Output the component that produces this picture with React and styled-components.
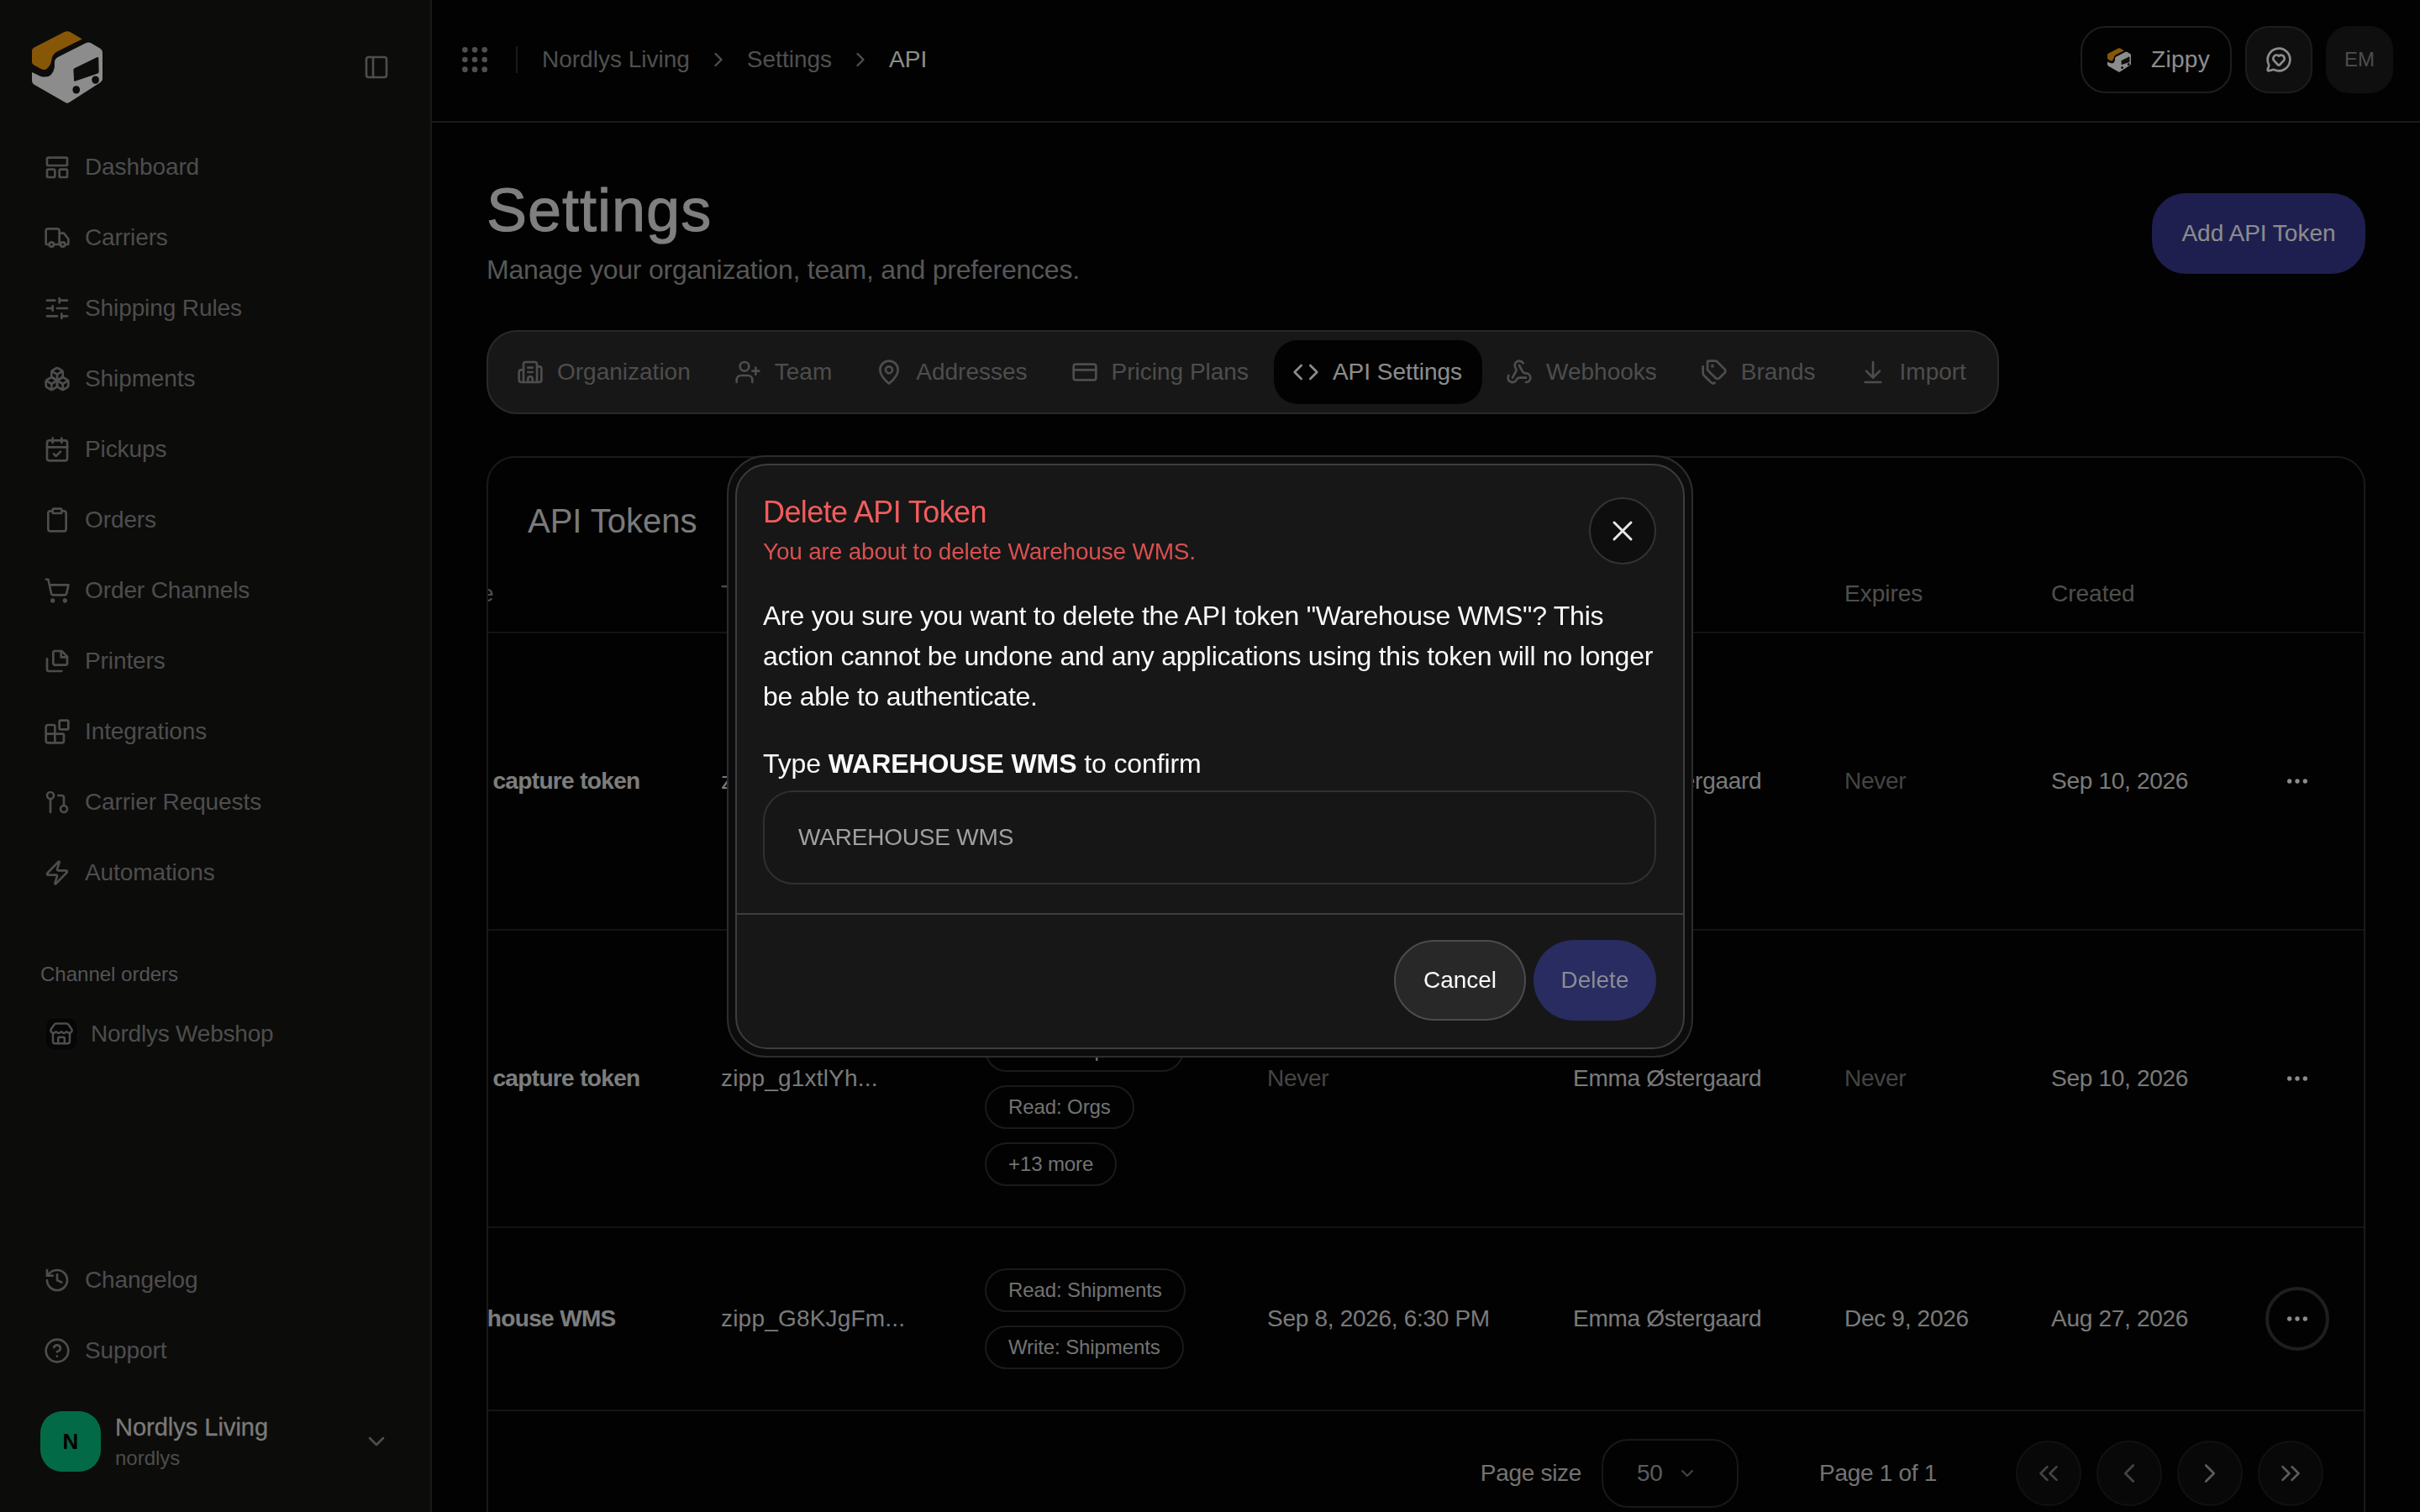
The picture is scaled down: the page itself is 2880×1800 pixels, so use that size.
import React, { useLayoutEffect, useRef } from 'react';
import styled, { createGlobalStyle } from 'styled-components';
import {
  Truck, SlidersHorizontal, Boxes, CalendarCheck, Clipboard, ShoppingCart, Blocks, GitPullRequest, Zap,
  History, CircleHelp, Store, ChevronDown, ChevronRight, ChevronLeft, ChevronsLeft, ChevronsRight,
  PanelLeft, Grip, MessageCircleHeart, Building2, UserPlus, MapPin, CreditCard, Code, Webhook, Tags,
  ArrowDownToLine, Ellipsis, X,
} from 'lucide-react';

const GlobalStyle = createGlobalStyle`
  html, body {
    margin: 0;
    height: 100%;
    overflow: hidden;
    background: #050505;
    font-family: "Liberation Sans", Arial, sans-serif;
  }
  * { box-sizing: border-box; }
`;

const Shell = styled.div`
  display: grid;
  grid-template-columns: 514px 1fr;
  height: 1800px;
  overflow: hidden;
  background: #050505;
`;

/* sidebar */
const Sidebar = styled.aside`
  display: flex;
  flex-direction: column;
  height: 1800px;
  background: #161614;
  border-right: 2px solid #2e2e2e;
  padding-bottom: 48px;
`;
const LogoRow = styled.div`
  display: flex;
  align-items: center;
  justify-content: space-between;
  height: 157px;
  padding: 0 48px 0 38px;
  color: #8c8c8c;
`;
const LogoRowInner = styled.div`
  display: flex;
  margin-top: 3px;
  color: #8c8c8c;
`;
const LogoSvg = styled.svg`
  display: block;
  flex: none;
`;
const NavList = styled.nav`
  display: flex;
  flex-direction: column;
`;
const NavItem = styled.a`
  display: flex;
  align-items: center;
  gap: 17px;
  height: 84px;
  padding-left: 52px;
  font-size: 28px;
  letter-spacing: -0.1px;
  color: #8c8c8c;
  svg { flex: none; }
`;
const SectionLabel = styled.div`
  margin: 59px 0 0 48px;
  font-size: 24px;
  line-height: 40px;
  color: #9a9a9a;
`;
const ChannelRow = styled.a`
  display: flex;
  align-items: center;
  gap: 15px;
  margin-top: 31px;
  padding-left: 53px;
  font-size: 28px;
  letter-spacing: -0.2px;
  color: #8c8c8c;
`;
const ChannelIcon = styled.span`
  display: flex;
  align-items: center;
  justify-content: center;
  width: 40px;
  height: 40px;
  border-radius: 12px;
  background: #0b0b0b;
  border: 1px solid #1e1e1e;
`;
const BottomNav = styled(NavList)`
  margin-top: auto;
`;
const OrgRow = styled.div`
  display: flex;
  align-items: center;
  gap: 17px;
  margin-top: 30px;
  padding: 0 48px;
`;
const OrgAvatar = styled.div`
  display: flex;
  align-items: center;
  justify-content: center;
  flex: none;
  width: 72px;
  height: 72px;
  border-radius: 26px;
  background: #06c281;
  color: #000;
  font-size: 26px;
  font-weight: 700;
`;
const OrgText = styled.div`
  flex: 1;
  display: flex;
  flex-direction: column;
  gap: 4px;
`;
const OrgName = styled.div`
  font-size: 29px;
  line-height: 36px;
  -webkit-text-stroke: 0.3px #dedede;
  color: #dedede;
`;
const OrgSlug = styled.div`
  font-size: 24px;
  line-height: 30px;
  color: #8c8c8c;
`;

/* top bar */
const Main = styled.main`
  display: flex;
  flex-direction: column;
  min-width: 0;
`;
const TopBar = styled.header`
  display: flex;
  align-items: center;
  height: 146px;
  flex: none;
  padding: 0 32px 2px 31px;
  border-bottom: 2px solid #303030;
`;
const Crumbs = styled.div`
  display: flex;
  align-items: center;
  flex: 1;
  font-size: 28px;
  color: #919191;
`;
const BarRule = styled.span`
  width: 2px;
  height: 32px;
  margin: 0 29px 0 29px;
  background: #303030;
`;
const Crumb = styled.span`
  color: ${(p) => (p.$current ? '#fff' : '#919191')};
`;
const CrumbSep = styled.span`
  display: flex;
  margin: 0 20px;
  color: #919191;
`;
const BarActions = styled.div`
  display: flex;
  align-items: center;
  gap: 16px;
`;
const ProductButton = styled.button`
  display: flex;
  align-items: center;
  gap: 24px;
  width: 180px;
  height: 80px;
  padding: 0 0 0 30px;
  border: 2px solid #363636;
  border-radius: 30px;
  background: transparent;
  color: #fff;
  font: 28px "Liberation Sans", Arial, sans-serif;
  letter-spacing: 0.3px;
`;
const SquareButton = styled.button`
  display: flex;
  align-items: center;
  justify-content: center;
  width: 80px;
  height: 80px;
  border: 2px solid ${(p) => (p.$plain ? '#1d1d1d' : '#363636')};
  border-radius: 28px;
  background: #1d1d1d;
  color: ${(p) => (p.$plain ? '#8c8c8c' : '#fff')};
  font: 24px "Liberation Sans", Arial, sans-serif;
`;

/* page content */
const Content = styled.div`
  flex: 1;
  display: flex;
  flex-direction: column;
  padding: 64px 65px 0;
`;
const PageHead = styled.div`
  display: flex;
  align-items: center;
  justify-content: space-between;
`;
const PageTitle = styled.h1`
  margin: 0;
  font-size: 72px;
  line-height: 80px;
  font-weight: 400;
  letter-spacing: 1px;
  -webkit-text-stroke: 1px #e8e8e8;
  color: #e8e8e8;
`;
const PageSub = styled.p`
  margin: 9px 0 0;
  font-size: 32px;
  line-height: 44px;
  letter-spacing: -0.23px;
  color: #9e9e9e;
`;
const AddButton = styled.button`
  width: 254px;
  height: 96px;
  margin-top: 3px;
  border: 0;
  border-radius: 40px;
  background: #373a91;
  color: #fff;
  font: 28px "Liberation Sans", Arial, sans-serif;
`;
const TabBar = styled.div`
  display: flex;
  gap: 6px;
  width: 1800px;
  height: 100px;
  margin-top: 50px;
  padding: 10px 10px 10px 12px;
  border: 2px solid #4c4c4c;
  border-radius: 36px;
  background: #2a2a2a;
`;
const Tab = styled.div`
  display: flex;
  align-items: center;
  gap: 16px;
  height: 76px;
  padding: 0 24px 0 22px;
  border-radius: 28px;
  font-size: 28px;
  background: ${(p) => (p.$active ? '#050505' : 'transparent')};
  color: ${(p) => (p.$active ? '#fff' : '#8c8c8c')};
`;

/* tokens table */
const Card = styled.section`
  flex: none;
  margin-top: 50px;
  border: 2px solid #303030;
  border-radius: 34px;
  height: 1300px;
`;
const CardTitle = styled.h2`
  margin: 0;
  height: 115px;
  padding: 52px 47px 0;
  font-size: 40px;
  line-height: 46px;
  font-weight: 400;
  color: #dedede;
`;
const TableScroll = styled.div`
  overflow-x: auto;
  scrollbar-width: none;
`;
const Table = styled.div`
  width: 2300px;
`;
const Row = styled.div`
  display: grid;
  grid-template-columns: 345px 314px 336px 364px 323px 246px 255px 117px;
  align-items: center;
  padding: ${(p) => (p.$head ? '0' : '48px 0')};
  height: ${(p) => (p.$head ? '94px' : 'auto')};
  border-bottom: 2px solid #242424;
  font-size: 28px;
  letter-spacing: ${(p) => (p.$head ? '0' : '-0.3px')};
  color: ${(p) => (p.$head ? '#8f8f8f' : '#dedede')};
`;
const Head = styled.div`
  padding-top: 2px;
`;
const NameCell = styled.div`
  padding-left: 2px;
  font-weight: 700;
  white-space: nowrap;
  color: #e4e4e4;
  letter-spacing: -0.65px;
`;
const TokenCell = styled.div`
  letter-spacing: 0.2px;
`;
const Dim = styled.span`
  color: ${(p) => (p.$dim ? '#7d7d7d' : '#dedede')};
`;
const ScopeList = styled.div`
  display: flex;
  flex-direction: column;
  align-items: flex-start;
  gap: 16px;
`;
const Scope = styled.span`
  display: flex;
  align-items: center;
  height: 52px;
  padding: 0 26px;
  border: 2px solid #303030;
  border-radius: 26px;
  font-size: 24px;
  letter-spacing: -0.1px;
  color: #cfcfcf;
`;
const RowAction = styled.button`
  display: flex;
  align-items: center;
  justify-content: center;
  width: 76px;
  height: 76px;
  padding: 0;
  border: 4px solid ${(p) => (p.$focused ? '#383838' : 'transparent')};
  border-radius: 50%;
  background: transparent;
  color: #fff;
`;
const Pager = styled.div`
  display: flex;
  align-items: center;
  justify-content: flex-end;
  padding: 33px 48px 0 0;
  font-size: 28px;
  letter-spacing: -0.3px;
  color: #d0d0d0;
`;
const PageSize = styled.div`
  display: flex;
  align-items: center;
  gap: 17px;
  width: 163px;
  height: 82px;
  margin: 0 96px 0 24px;
  padding-left: 40px;
  border: 2px solid #2d2d2d;
  border-radius: 32px;
  color: #a8a8a8;
`;
const PagerButtons = styled.div`
  display: flex;
  gap: 18px;
  margin-left: 94px;
`;
const PagerButton = styled.button`
  display: flex;
  align-items: center;
  justify-content: center;
  width: 78px;
  height: 78px;
  padding: 0;
  border: 2px solid #1f1f1f;
  border-radius: 50%;
  background: #0f0f0f;
  color: ${(p) => (p.$off ? '#7d7d7d' : '#a8a8a8')};
`;

/* delete dialog */
const Scrim = styled.div`
  position: fixed;
  inset: 0;
  display: flex;
  align-items: center;
  justify-content: center;
  background: rgba(0, 0, 0, 0.45);
`;
const DialogRing = styled.div`
  padding: 8px;
  border: 2px solid #2c2c2c;
  border-radius: 46px;
  background: #0c0c0c;
`;
const Dialog = styled.div`
  width: 1130px;
  border: 2px solid #3d3d3d;
  border-radius: 38px;
  background: #171717;
`;
const DialogBody = styled.div`
  padding: 34px 32px 34px 31px;
`;
const DialogHead = styled.div`
  display: flex;
  align-items: center;
  justify-content: space-between;
`;
const DialogTitle = styled.h3`
  margin: 0;
  font-size: 36px;
  line-height: 44px;
  font-weight: 400;
  letter-spacing: -0.6px;
  color: #f25c5c;
`;
const DialogSub = styled.p`
  margin: 7px 0 0;
  font-size: 28px;
  line-height: 36px;
  letter-spacing: -0.2px;
  color: #d85050;
`;
const CloseButton = styled.button`
  display: flex;
  align-items: center;
  justify-content: center;
  width: 80px;
  height: 80px;
  margin-top: 2px;
  padding: 0;
  border: 2px solid #333;
  border-radius: 50%;
  background: #0e0e0e;
  color: #e6e6e6;
`;
const DialogText = styled.p`
  margin: 34px 0 0;
  font-size: 32px;
  line-height: 48px;
  letter-spacing: -0.25px;
  color: #fafafa;
`;
const ConfirmLabel = styled.label`
  display: block;
  margin-top: 32px;
  font-size: 32px;
  line-height: 48px;
  letter-spacing: -0.1px;
  color: #fafafa;
  b { font-weight: 700; }
`;
const ConfirmInput = styled.input`
  display: block;
  width: 100%;
  height: 112px;
  margin-top: 8px;
  padding: 0 40px;
  border: 2px solid #303030;
  border-radius: 36px;
  background: #161616;
  color: #a0a0a0;
  font: 28px "Liberation Sans", Arial, sans-serif;
  letter-spacing: -0.2px;
  outline: none;
`;
const DialogFoot = styled.div`
  display: flex;
  justify-content: flex-end;
  gap: 9px;
  padding: 30px 32px 32px;
  border-top: 2px solid #3d3d3d;
`;
const FootButton = styled.button`
  height: 96px;
  width: ${(p) => (p.$primary ? '146px' : '157px')};
  padding: 0;
  border: ${(p) => (p.$primary ? '0' : '2px solid #4c4c4c')};
  border-radius: 48px;
  background: ${(p) => (p.$primary ? '#292c60' : '#282828')};
  color: ${(p) => (p.$primary ? '#8b8b96' : '#fafafa')};
  font: 28px "Liberation Sans", Arial, sans-serif;
`;

// icons with no close match in the packages
const DashIcon = () => (
  <svg width="32" height="32" viewBox="0 0 24 24" fill="none" stroke="currentColor" strokeWidth="2" strokeLinejoin="round">
    <rect x="3" y="3.5" width="18" height="7" rx="1" />
    <rect x="3" y="14" width="7" height="7" rx="1" />
    <rect x="14" y="14" width="7" height="7" rx="1" />
  </svg>
);
const PagesIcon = () => (
  <svg width="32" height="32" viewBox="0 0 24 24" fill="none" stroke="currentColor" strokeWidth="2" strokeLinecap="round" strokeLinejoin="round">
    <path d="M10 3h6l5 5v6a1.500 1.500 0 0 1-1.500 1.500H10A1.500 1.500 0 0 1 8.500 14V4.500A1.500 1.500 0 0 1 10 3z" />
    <path d="M15.500 3v5.500H21" />
    <path d="M3 10v9.500A1.500 1.500 0 0 0 4.500 21H16" />
  </svg>
);
const Logo = ({ width, height }) => (
  <LogoSvg width={width} height={height} viewBox="0 0 250 256">
    <path fill="#f59e0b" d="M0 70 Q0 62 8 58 L115 3 Q125 -2 135 3 L178 28 L90 72 Q72 82 70 100 Q68 122 52 134 Q44 140 32 134 L6 120 Q0 116 0 110 Z" />
    <path fill="#fff" d="M0 146 L30 160 Q72 172 80 128 L80 112 Q80 98 92 92 L192 42 Q200 38 208 42 L242 62 Q250 68 250 76 L250 170 Q250 178 242 182 L133 252 Q125 258 117 252 L8 190 Q0 184 0 176 Z" />
    <path fill="#161614" d="M147 138 Q147 134 151 132 L230 93 Q236 91 236 96 L237 144 Q237 148 233 150 L154 177 Q149 179 149 174 Z" />
    <ellipse fill="#161614" cx="157" cy="208" rx="13" ry="14" />
    <ellipse fill="#161614" cx="225" cy="173" rx="13" ry="14" />
  </LogoSvg>
);

const primaryNav = [
  { label: 'Dashboard', Icon: DashIcon },
  { label: 'Carriers', Icon: Truck },
  { label: 'Shipping Rules', Icon: SlidersHorizontal },
  { label: 'Shipments', Icon: Boxes },
  { label: 'Pickups', Icon: CalendarCheck },
  { label: 'Orders', Icon: Clipboard },
  { label: 'Order Channels', Icon: ShoppingCart },
  { label: 'Printers', Icon: PagesIcon },
  { label: 'Integrations', Icon: Blocks },
  { label: 'Carrier Requests', Icon: GitPullRequest },
  { label: 'Automations', Icon: Zap },
];

const tabs = [
  { label: 'Organization', Icon: Building2 },
  { label: 'Team', Icon: UserPlus },
  { label: 'Addresses', Icon: MapPin },
  { label: 'Pricing Plans', Icon: CreditCard },
  { label: 'API Settings', Icon: Code, active: true },
  { label: 'Webhooks', Icon: Webhook },
  { label: 'Brands', Icon: Tags },
  { label: 'Import', Icon: ArrowDownToLine },
];

const columns = ['Name', 'Token', 'Scopes', 'Last used', 'Created by', 'Expires', 'Created', ''];

const tokens = [
  {
    name: 'Logs capture token',
    token: 'zipp_xP4mRtq...',
    scopes: ['Read: Shipments', 'Write: Shipments', 'Read: Orgs', '+13 more'],
    lastUsed: 'Never',
    expires: 'Never',
    created: 'Sep 10, 2026',
  },
  {
    name: 'Logs capture token',
    token: 'zipp_g1xtlYh...',
    scopes: ['Read: Shipments', 'Write: Shipments', 'Read: Orgs', '+13 more'],
    lastUsed: 'Never',
    expires: 'Never',
    created: 'Sep 10, 2026',
  },
  {
    name: 'Warehouse WMS',
    token: 'zipp_G8KJgFm...',
    scopes: ['Read: Shipments', 'Write: Shipments'],
    lastUsed: 'Sep 8, 2026, 6:30 PM',
    expires: 'Dec 9, 2026',
    created: 'Aug 27, 2026',
    focused: true,
  },
];

const App = () => {
  const scrollRef = useRef(null);

  // the table sits scrolled a little to the right
  useLayoutEffect(() => {
    if (scrollRef.current) scrollRef.current.scrollLeft = 68;
  }, []);

  return (
    <>
      <GlobalStyle />
      <Shell>
        <Sidebar>
          <LogoRow>
            <LogoRowInner><Logo width={84} height={86} /></LogoRowInner>
            <LogoRowInner><PanelLeft size={32} /></LogoRowInner>
          </LogoRow>
          <NavList>
            {primaryNav.map(({ label, Icon }) => (
              <NavItem key={label}><Icon size={32} />{label}</NavItem>
            ))}
          </NavList>
          <SectionLabel>Channel orders</SectionLabel>
          <ChannelRow>
            <ChannelIcon><Store size={30} /></ChannelIcon>
            Nordlys Webshop
          </ChannelRow>
          <BottomNav>
            <NavItem><History size={32} />Changelog</NavItem>
            <NavItem><CircleHelp size={32} />Support</NavItem>
          </BottomNav>
          <OrgRow>
            <OrgAvatar>N</OrgAvatar>
            <OrgText>
              <OrgName>Nordlys Living</OrgName>
              <OrgSlug>nordlys</OrgSlug>
            </OrgText>
            <ChevronDown size={32} color="#8c8c8c" />
          </OrgRow>
        </Sidebar>

        <Main>
          <TopBar>
            <Crumbs>
              <Grip size={40} />
              <BarRule />
              <Crumb>Nordlys Living</Crumb>
              <CrumbSep><ChevronRight size={28} /></CrumbSep>
              <Crumb>Settings</Crumb>
              <CrumbSep><ChevronRight size={28} /></CrumbSep>
              <Crumb $current>API</Crumb>
            </Crumbs>
            <BarActions>
              <ProductButton><Logo width={28} height={29} />Zippy</ProductButton>
              <SquareButton><MessageCircleHeart size={32} /></SquareButton>
              <SquareButton $plain>EM</SquareButton>
            </BarActions>
          </TopBar>

          <Content>
            <PageHead>
              <div>
                <PageTitle>Settings</PageTitle>
                <PageSub>Manage your organization, team, and preferences.</PageSub>
              </div>
              <AddButton>Add API Token</AddButton>
            </PageHead>

            <TabBar>
              {tabs.map(({ label, Icon, active }) => (
                <Tab key={label} $active={active}><Icon size={32} />{label}</Tab>
              ))}
            </TabBar>

            <Card>
              <CardTitle>API Tokens</CardTitle>
              <TableScroll ref={scrollRef}>
                <Table>
                  <Row $head>
                    {columns.map((col) => <Head key={col}>{col}</Head>)}
                  </Row>
                  {tokens.map((t) => (
                    <Row key={t.token}>
                      <NameCell>{t.name}</NameCell>
                      <TokenCell>{t.token}</TokenCell>
                      <ScopeList>
                        {t.scopes.map((s) => <Scope key={s}>{s}</Scope>)}
                      </ScopeList>
                      <Dim $dim={t.lastUsed === 'Never'}>{t.lastUsed}</Dim>
                      <div>Emma Østergaard</div>
                      <Dim $dim={t.expires === 'Never'}>{t.expires}</Dim>
                      <div>{t.created}</div>
                      <RowAction $focused={t.focused}><Ellipsis size={32} /></RowAction>
                    </Row>
                  ))}
                </Table>
              </TableScroll>
              <Pager>
                Page size
                <PageSize>50<ChevronDown size={24} color="#7d7d7d" /></PageSize>
                Page 1 of 1
                <PagerButtons>
                  <PagerButton $off><ChevronsLeft size={38} strokeWidth={1.7} /></PagerButton>
                  <PagerButton $off><ChevronLeft size={38} strokeWidth={1.7} /></PagerButton>
                  <PagerButton><ChevronRight size={38} strokeWidth={1.7} /></PagerButton>
                  <PagerButton><ChevronsRight size={38} strokeWidth={1.7} /></PagerButton>
                </PagerButtons>
              </Pager>
            </Card>
          </Content>
        </Main>
      </Shell>

      <Scrim>
        <DialogRing>
          <Dialog>
            <DialogBody>
              <DialogHead>
                <div>
                  <DialogTitle>Delete API Token</DialogTitle>
                  <DialogSub>You are about to delete Warehouse WMS.</DialogSub>
                </div>
                <CloseButton><X size={40} strokeWidth={1.8} /></CloseButton>
              </DialogHead>
              <DialogText>
                Are you sure you want to delete the API token "Warehouse WMS"? This<br />
                action cannot be undone and any applications using this token will no longer<br />
                be able to authenticate.
              </DialogText>
              <ConfirmLabel>Type <b>WAREHOUSE WMS</b> to confirm</ConfirmLabel>
              <ConfirmInput defaultValue="WAREHOUSE WMS" />
            </DialogBody>
            <DialogFoot>
              <FootButton>Cancel</FootButton>
              <FootButton $primary>Delete</FootButton>
            </DialogFoot>
          </Dialog>
        </DialogRing>
      </Scrim>
    </>
  );
};

export default App;
